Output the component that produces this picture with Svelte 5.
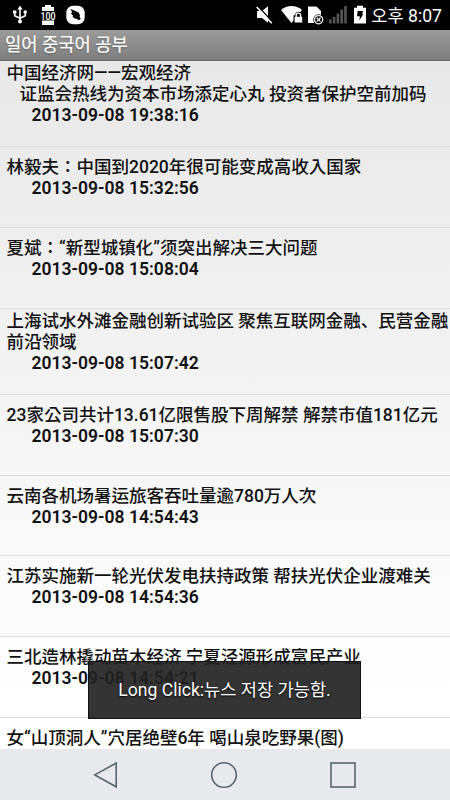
<script>
  const title = '일어 중국어 공부';
  const clock = '오후 8:07';
  const toast = 'Long Click:뉴스 저장 가능함.';

  const news = [
    {
      lines: ['中国经济网——宏观经济', '   证监会热线为资本市场添定心丸 投资者保护空前加码'],
      date: '2013-09-08 19:38:16'
    },
    { lines: ['林毅夫：中国到2020年很可能变成高收入国家'], date: '2013-09-08 15:32:56' },
    { lines: ['夏斌：“新型城镇化”须突出解决三大问题'], date: '2013-09-08 15:08:04' },
    {
      lines: ['上海试水外滩金融创新试验区 聚焦互联网金融、民营金融', '前沿领域'],
      date: '2013-09-08 15:07:42'
    },
    { lines: ['23家公司共计13.61亿限售股下周解禁 解禁市值181亿元'], date: '2013-09-08 15:07:30' },
    { lines: ['云南各机场暑运旅客吞吐量逾780万人次'], date: '2013-09-08 14:54:43' },
    { lines: ['江苏实施新一轮光伏发电扶持政策 帮扶光伏企业渡难关'], date: '2013-09-08 14:54:36' },
    { lines: ['三北造林撬动苗木经济 宁夏泾源形成富民产业'], date: '2013-09-08 14:54:21' },
    { lines: ['女“山顶洞人”穴居绝壁6年 喝山泉吃野果(图)'], date: '' }
  ];
</script>

<div class="screen">
  <header class="status-bar">
    <div class="status-left">
      <!-- USB -->
      <svg width="16" height="20" viewBox="0 0 16 20" fill="none" stroke="#fff" stroke-width="1.6">
        <path d="M8 3v13M2.7 7.5v3.2L8 13.2M13.3 7.5v3.2L8 13.2" />
        <path d="M8 .7 10.7 4.5H5.3zM1 5.5h3.4v3H1z" fill="#fff" stroke="none" />
        <circle cx="13.2" cy="7" r="1.8" fill="#fff" stroke="none" />
        <circle cx="8" cy="16.5" r="2" fill="#fff" stroke="none" />
      </svg>
      <!-- Battery level -->
      <svg class="level" width="16" height="20" viewBox="0 0 16 20">
        <path d="M5 0h6v2h3v4H2V2h3zM2 15.5h12V20H2z" fill="#fff" />
        <text x="8" y="14.7" text-anchor="middle" textLength="15" lengthAdjust="spacingAndGlyphs">100</text>
      </svg>
      <!-- App notification -->
      <svg class="app" width="19" height="20" viewBox="0 0 19 20">
        <rect x=".3" y=".8" width="18.4" height="18.4" rx="6.8" fill="#fff" />
        <path d="M4.5 4 9.5 6l3.200 1.500 1.300 2.700-.4 1.500 1.200 2-1.800 1.500-2-1.300-3-.6-1.500-2 .5-.8-2.300-2.300 1.500-.7z" fill="#000" />
      </svg>
    </div>
    <div class="status-right">
      <!-- Muted -->
      <svg width="17" height="20" viewBox="0 0 17 20">
        <path d="M1 6h5l6-4.700v16.400L6 13H1z" fill="#fff" />
        <path d="M1.800 1 17 17.5" stroke="#000" stroke-width="1.3" />
        <path d="M.7 2 15.8 18.3" stroke="#fff" stroke-width="1.6" />
      </svg>
      <!-- Secured wifi -->
      <svg class="wifi" width="22" height="20" viewBox="0 0 22 20">
        <path d="M0 5C6-.5 15-.5 21 5L10.5 18z" fill="#fff" />
        <path d="M12.5 18.5V10.5l1.500-.5c.3-4.500 6.700-4.500 7 0l1 .5v8z" fill="#000" />
        <rect x="13.6" y="11.8" width="7.6" height="5.7" fill="#fff" />
        <path d="M15.200 12V10.300a2.200 2.200 0 0 1 4.400 0V12" fill="none" stroke="#fff" stroke-width="1.3" />
      </svg>
      <!-- No SIM -->
      <svg class="sim" width="16" height="20" viewBox="0 0 16 20">
        <path d="M0 1.500h8.500L13 6v12H0z" fill="#fff" />
        <circle cx="10.6" cy="14.7" r="5.4" fill="#000" />
        <circle cx="10.6" cy="14.7" r="4.1" fill="none" stroke="#fff" stroke-width="1.3" />
        <path d="M8.700 12.800l3.800 3.800M12.500 12.800l-3.800 3.800" stroke="#fff" stroke-width="1.3" />
      </svg>
      <!-- Signal -->
      <svg class="signal" width="18" height="20" viewBox="0 0 18 20" fill="#555">
        <path d="M0 14.500h2.600V18.500H0zM3.800 12h2.600v6.500H3.800zM7.600 8.500h2.600v10H7.600zM11.400 4.500H14v14h-2.600zM15.200 1h2.600v17.500h-2.600z" />
      </svg>
      <!-- Charging -->
      <svg class="charge" width="12" height="20" viewBox="0 0 12 20">
        <path d="M3 .7h6v2h3V18.500H0V2.700h3z" fill="#fff" />
        <path d="M3.700 6H9l-.8 3.200 1 .1-3.800 6.200.4-4.200H3z" fill="#000" />
      </svg>
      <span class="clock">{clock}</span>
    </div>
  </header>

  <h1 class="title-bar">{title}</h1>

  <main class="news-list">
    {#each news as item}
      <article class="news-item" class:tall={item.lines.length > 1}>
        {#each item.lines as line}
          <p class="headline">{line}</p>
        {/each}
        <p class="date">{item.date}</p>
      </article>
    {/each}
  </main>

  <nav class="nav-bar">
    <svg width="26" height="28" viewBox="0 0 26 28"><path d="M23.200 2v23.800L1.800 13.900z" /></svg>
    <svg width="28" height="28" viewBox="0 0 28 28"><circle cx="14" cy="14" r="12.3" /></svg>
    <svg width="28" height="28" viewBox="0 0 28 28"><rect x="2" y="2" width="24" height="24" /></svg>
  </nav>

  <div class="toast">{toast}</div>
</div>

<style>
  :global(body) {
    margin: 0;
  }

  .screen {
    position: relative;
    display: flex;
    flex-direction: column;
    width: 450px;
    height: 800px;
    overflow: hidden;
    font-family: Roboto, 'Noto Sans CJK KR', sans-serif;
    background: linear-gradient(#e8e8e8 61px, #fff 700px);
  }

  .status-bar {
    flex: none;
    display: flex;
    justify-content: space-between;
    box-sizing: border-box;
    height: 30px;
    padding: 5px 8px 0 12px;
    color: #fff;
    background: #000;
  }

  .status-left,
  .status-right {
    display: flex;
    align-items: flex-start;
  }

  .status-bar svg {
    flex: none;
  }

  .level {
    margin-left: 12px;
  }

  .level text {
    font-size: 11px;
    font-weight: 500;
    fill: #fff;
  }

  .app {
    margin-left: 10px;
  }

  .wifi {
    margin-left: 8px;
  }

  .sim {
    margin-left: 5px;
  }

  .signal {
    margin-left: 5px;
  }

  .charge {
    margin-left: 7px;
  }

  .clock {
    margin-left: 5px;
    font-size: 17.6px;
    line-height: 22px;
    white-space: nowrap;
  }

  .title-bar {
    flex: none;
    box-sizing: border-box;
    height: 31px;
    margin: 0;
    padding-left: 5px;
    border-bottom: 1px solid #686868;
    font-size: 17.7px;
    font-weight: 400;
    line-height: 31px;
    color: #fff;
    -webkit-text-stroke: 0.2px #fff;
    text-shadow: 0 1px 2px rgba(0, 0, 0, 0.3);
    background: linear-gradient(#9b9b9b, #7e7e7e);
  }

  .news-list {
    flex: 1;
    min-height: 0;
    overflow: hidden;
  }

  .news-item {
    box-sizing: border-box;
    height: 80.75px;
    padding: 10px 0 0 6.5px;
    border-bottom: 1px solid #dedede;
  }

  .news-item.tall {
    height: 86.2px;
    padding-top: 2px;
  }

  .news-item p {
    margin: 0;
    font-size: 17.5px;
    line-height: 20.9px;
    white-space: pre;
    color: #111;
  }

  .news-item .headline {
    font-weight: 500;
  }

  .news-item .date {
    padding-left: 25px;
    font-weight: 600;
    letter-spacing: 0.03px;
  }

  .nav-bar {
    flex: none;
    display: flex;
    justify-content: center;
    align-items: center;
    gap: 91px;
    box-sizing: border-box;
    height: 51px;
    background: #e8e9ed;
  }

  .nav-bar svg {
    fill: none;
    stroke: #56646b;
    stroke-width: 1.6;
  }

  .toast {
    position: absolute;
    left: 88px;
    top: 661px;
    box-sizing: border-box;
    width: 273px;
    height: 58px;
    border: 1px solid #111;
    font-size: 17.6px;
    line-height: 57px;
    text-align: center;
    white-space: nowrap;
    color: #fff;
    text-shadow: 0 1px 2px #000;
    background: rgba(32, 32, 32, 0.91);
  }
</style>
